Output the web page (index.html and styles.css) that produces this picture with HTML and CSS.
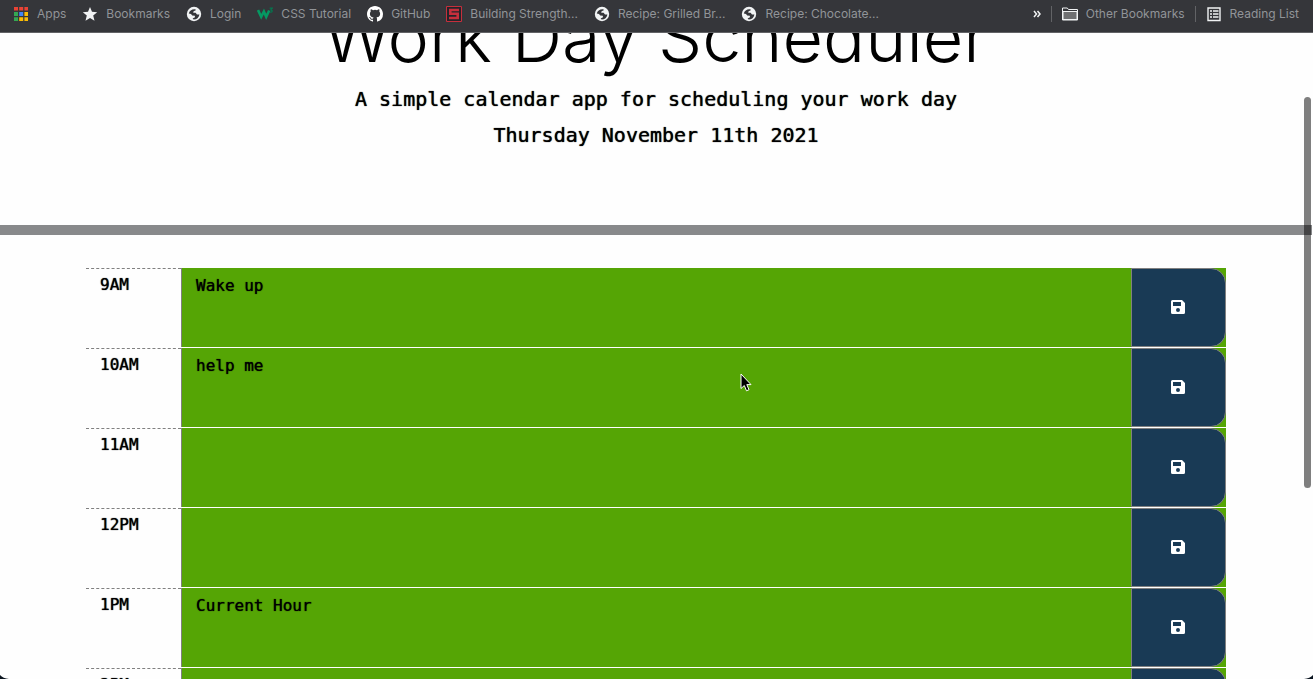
FILE: index.html
```
<!DOCTYPE html>
<html lang="en">
<head>
<meta charset="utf-8">
<title>Work Day Scheduler</title>
<link rel="stylesheet" href="styles.css">
</head>
<body>
<svg class="defs" aria-hidden="true">
  <symbol id="globe" viewBox="0 0 16 16">
    <circle cx="8" cy="8" r="7.2" fill="#f1f3f4"/>
    <path d="M2.8 7.600C3.400 4.600 6 2.800 9.400 3.200L9.800 4.200 7.600 5.200 7.200 6.800H9.600L11 8.400H13.400C13 11.400 10.800 13.400 7.600 13.400L6.600 12.400 9 11.200 8.800 9.800 6.200 9.400 5 8Z" fill="#35363a"/>
  </symbol>
  <symbol id="save" viewBox="0 0 14 14">
    <path fill-rule="evenodd" d="M1.5 0H11L14 3V12.5A1.5 1.5 0 0 1 12.5 14H1.5A1.5 1.5 0 0 1 0 12.5V1.5A1.5 1.5 0 0 1 1.5 0ZM2 2V6H10V2ZM7 8A2 2 0 1 0 7 12A2 2 0 1 0 7 8Z" fill="#fff"/>
  </symbol>
</svg>
<nav class="bookmarks" aria-label="Bookmarks">
  <a class="bookmark" href="#"><svg class="icon" viewBox="0 0 16 16"><path fill="#ea4335" d="M1 1h4v3.5H1zM6.2 1h4v3.5h-4zM11.4 1h3.6v3.5h-3.6z"/><path fill="#34a853" d="M1 6h4v4H1zM1 11.2h4V15H1z"/><path fill="#4285f4" d="M6.2 6h4v4h-4z"/><path fill="#fbbc04" d="M11.4 6H15v4h-3.6zM6.2 11.2h4V15h-4zM11.4 11.2H15V15h-3.6z"/></svg>Apps</a>
  <a class="bookmark" href="#"><svg class="icon" viewBox="0 0 16 16"><path fill="#f1f3f4" d="M8 1l2 4.8 5.2.4-4 3.4 1.3 5.1L8 11.9l-4.5 2.8 1.3-5.1-4-3.4L6 5.800z"/></svg>Bookmarks</a>
  <a class="bookmark" href="#"><svg class="icon"><use href="#globe"/></svg>Login</a>
  <a class="bookmark" href="#"><svg class="icon" viewBox="0 0 16 16"><path fill="none" stroke="#059862" stroke-width="2.600" d="M1 4L4.200 10.800 6.900 5.500 9.200 10.800 12.200 4.500"/><path fill="none" stroke="#04764e" stroke-width="1.200" d="M12.600 2.200h2.600l-1.400 1.800c2 .2 1.800 2.600-.8 2.200"/></svg>CSS Tutorial</a>
  <a class="bookmark" href="#"><svg class="icon" viewBox="0 0 16 16"><path fill="#fff" d="M8 0C3.580 0 0 3.580 0 8c0 3.540 2.290 6.530 5.470 7.590.4.070.55-.17.55-.38 0-.19-.01-.82-.01-1.490-2.010.37-2.530-.49-2.690-.94-.09-.23-.48-.94-.82-1.130-.28-.15-.68-.52-.01-.53.63-.01 1.080.58 1.230.82.72 1.210 1.870.87 2.330.66.070-.52.28-.87.51-1.070-1.780-.2-3.640-.89-3.640-3.950 0-.87.31-1.590.82-2.150-.08-.2-.36-1.020.08-2.120 0 0 .67-.21 2.200.82a7.600 7.600 0 0 1 4 0c1.530-1.040 2.200-.82 2.200-.82.44 1.100.16 1.920.08 2.120.51.56.82 1.270.82 2.150 0 3.070-1.870 3.750-3.650 3.950.29.25.54.73.54 1.480 0 1.070-.01 1.930-.01 2.200 0 .21.15.46.55.38A8 8 0 0 0 16 8c0-4.420-3.580-8-8-8z"/></svg>GitHub</a>
  <a class="bookmark" href="#"><svg class="icon" viewBox="0 0 16 16"><path fill="#24252a" stroke="#c62f3c" stroke-width="1" d="M.5.5h15v15H.5z"/><path fill="none" stroke="#c62f3c" stroke-width="2.600" d="M13 4H4.300v3.800h7.400V12H3"/></svg>Building Strength...</a>
  <a class="bookmark" href="#"><svg class="icon"><use href="#globe"/></svg>Recipe: Grilled Br...</a>
  <a class="bookmark" href="#"><svg class="icon"><use href="#globe"/></svg>Recipe: Chocolate...</a>
  <div class="bookmarks-end">
    <button class="more" type="button" aria-label="More bookmarks"><svg class="chevrons" viewBox="0 0 8 8"><path d="M1 1l2.500 3L1 7M4.500 1L7 4 4.500 7" fill="none" stroke="#f1f3f4" stroke-width="1.500"/></svg></button>
    <a class="bookmark divided" href="#"><svg class="icon" viewBox="0 0 16 16"><path d="M.5 14V2h4.800l1.200 1.500h9V14z" fill="#35363a" stroke="#f1f3f4"/><path d="M1 5.500h14v8H1z" fill="#6f7072" stroke="#f1f3f4"/></svg>Other Bookmarks</a>
    <a class="bookmark divided" href="#"><svg class="icon" viewBox="0 0 16 16"><path d="M2 2h12v12.500H2z" fill="none" stroke="#f1f3f4" stroke-width="1.400"/><path d="M4 5h2M7 5h5.500M4 8h2M7 8h5.500M4 11h2M7 11h5.500" stroke="#f1f3f4" stroke-width="1.500"/></svg>Reading List</a>
  </div>
</nav>
<div class="page">
  <header class="jumbotron">
    <h1 class="title">Work Day Scheduler</h1>
    <p class="lead">A simple calendar app for scheduling your work day</p>
    <p class="lead">Thursday November 11th 2021</p>
  </header>
  <main class="container">
    <div class="row"><label class="hour" for="h9">9AM</label><textarea class="task" id="h9">Wake up</textarea><button class="save" type="button" aria-label="Save 9AM"><svg class="disk"><use href="#save"/></svg></button></div>
    <div class="row"><label class="hour" for="h10">10AM</label><textarea class="task" id="h10">help me</textarea><button class="save" type="button" aria-label="Save 10AM"><svg class="disk"><use href="#save"/></svg></button></div>
    <div class="row"><label class="hour" for="h11">11AM</label><textarea class="task" id="h11"></textarea><button class="save" type="button" aria-label="Save 11AM"><svg class="disk"><use href="#save"/></svg></button></div>
    <div class="row"><label class="hour" for="h12">12PM</label><textarea class="task" id="h12"></textarea><button class="save" type="button" aria-label="Save 12PM"><svg class="disk"><use href="#save"/></svg></button></div>
    <div class="row"><label class="hour" for="h13">1PM</label><textarea class="task" id="h13">Current Hour</textarea><button class="save" type="button" aria-label="Save 1PM"><svg class="disk"><use href="#save"/></svg></button></div>
    <div class="row"><label class="hour" for="h14">2PM</label><textarea class="task" id="h14"></textarea><button class="save" type="button" aria-label="Save 2PM"><svg class="disk"><use href="#save"/></svg></button></div>
  </main>
</div>
<div class="scroll-thumb"></div>
<svg class="corner corner-left" viewBox="0 0 10 4"><path d="M0 0Q3 3.500 9 4H0z" fill="#0b1520"/></svg>
<svg class="corner corner-right" viewBox="0 0 10 4"><path d="M10 0Q7 3.500 1 4H10z" fill="#0b1520"/></svg>
<svg class="cursor" viewBox="0 0 12 19"><path d="M1 1V15.500L4.300 12.500 6.500 17.800 9 16.700 6.800 11.600H11z" fill="#000" stroke="#fff" stroke-width="1"/></svg>
</body>
</html>
```
FILE: styles.css
```
* { box-sizing: border-box; }
body {
  margin: 0;
  height: 100vh;
  display: flex;
  flex-direction: column;
  overflow: hidden;
  position: relative;
  background: #fefefe;
  color: #000;
  font-family: "DejaVu Sans Mono", monospace;
  font-size: 16px;
  line-height: 24px;
}
.defs { display: none; }

.bookmarks {
  flex: none;
  display: flex;
  align-items: center;
  gap: 16px;
  height: 33px;
  padding: 0 14px 5px 13px;
  background: #35363a;
  border-bottom: 1px solid #626366;
  font-family: Inter, sans-serif;
  font-size: 12px;
  line-height: 16px;
}
.bookmark {
  display: flex;
  align-items: center;
  gap: 8px;
  color: #919498;
  text-decoration: none;
  white-space: nowrap;
}
.icon { flex: none; width: 16px; height: 16px; }
.bookmarks-end { display: flex; align-items: center; gap: 10px; margin-left: auto; }
.more { display: flex; padding: 0; border: 0; background: none; }
.chevrons { width: 8px; height: 8px; }
.divided { border-left: 1px solid #626366; padding-left: 10px; }

.page { flex: 1; min-height: 0; overflow: hidden; padding-right: 1px; }
.jumbotron {
  margin-top: -40px;
  padding-bottom: 72px;
  border-bottom: 10px solid #88898b;
  text-align: center;
}
.title {
  margin: 0;
  font-family: Inter, sans-serif;
  font-weight: 300;
  font-size: 70px;
  line-height: 88px;
}
.lead {
  margin: 0;
  font-size: 20px;
  line-height: 36px;
}
.lead, .hour, .task { text-shadow: 0 0 1px #000; }

.container { max-width: 1140px; margin: 33px auto 0; }
.row {
  display: grid;
  grid-template-columns: 1fr 10fr 1fr;
  height: 80px;
  border-bottom: 1px solid #fff;
  background: linear-gradient(#55a505, #55a505) right / 95px 100% no-repeat;
}
.hour {
  padding: 4px 14px;
  border-top: 1px dashed #808080;
}
.task {
  display: block;
  width: 100%;
  height: 100%;
  padding: 6px 14px;
  border: 0;
  border-left: 1px solid #808080;
  border-radius: 0;
  resize: none;
  outline: 0;
  background: #55a505;
  color: #000;
  font: inherit;
}
.save {
  display: grid;
  place-items: center;
  padding: 0 2px 2px 0;
  border: 1px solid #808080;
  border-radius: 0 15px 15px 0;
  background: #193a55;
}
.disk { width: 14px; height: 14px; }

.scroll-thumb {
  position: absolute;
  top: 97px;
  right: 2px;
  width: 7px;
  height: 391px;
  border-radius: 4px;
  background: rgba(0, 0, 0, 0.5);
}
.corner { position: absolute; bottom: 0; width: 10px; height: 4px; }
.corner-left { left: 0; }
.corner-right { right: 0; }
.cursor { position: absolute; left: 740px; top: 373px; width: 12px; height: 19px; }
```
